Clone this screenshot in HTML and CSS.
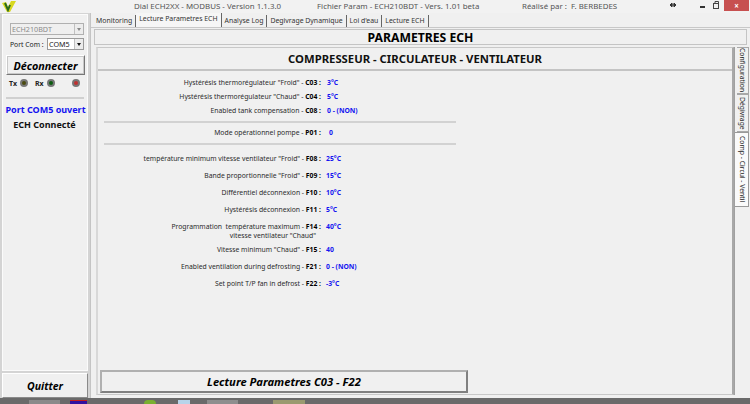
FILE: index.html
```html
<!DOCTYPE html>
<html lang="fr">
<head>
<meta charset="utf-8">
<title>Dial ECH2XX</title>
<link rel="stylesheet" href="styles.css">
</head>
<body>
<div class="app">
  <header class="titlebar">
    <svg class="logo" width="16" height="13" viewBox="0 0 16 13"><path d="M1 3l4-1 2 5 3-6 5 0-6 11-3 0z" fill="#d8d820"/><path d="M4 3l3 7 2-5" fill="none" stroke="#2a6a20" stroke-width="2"/></svg>
    <span class="t1">Dial ECH2XX - MODBUS - Version 1.1.3.0</span>
    <span class="t2">Fichier Param - ECH210BDT - Vers. 1.01 beta</span>
    <span class="t3">Réalisé par :  F. BERBEDES</span>
    <svg class="arrows" width="15" height="10" viewBox="0 0 15 10"><path d="M3 5h6M3 5l2-2v4zM9 5l-2-2v4z" fill="#333" stroke="#333"/></svg>
    <div class="wctl">
      <svg class="wicons" width="37" height="10" viewBox="0 0 37 10"><rect x="18" y="6" width="5" height="2" fill="#333"/><rect x="31.5" y="3.5" width="5" height="5" fill="none" stroke="#444"/><path d="M33 3.5V1.5h3.5v5" fill="none" stroke="#444"/></svg>
      <span class="close">×</span>
    </div>
  </header>
  <main class="main">
    <aside class="side">
      <div class="sidebox">
        <div class="combo wide disabled"><span>ECH210BDT</span><i class="drop"></i></div>
        <div class="portrow"><span>Port Com :</span><div class="combo small"><span>COM5</span><i class="drop dark"></i></div></div>
        <button class="connect">Déconnecter</button>
        <div class="leds">
          <b>Tx</b><i class="led olive"></i>
          <b class="rx">Rx</b><i class="led green"></i>
          <i class="led red"></i>
        </div>
        <hr class="sep">
        <div class="port">Port COM5 ouvert</div>
        <div class="conn">ECH Connecté</div>
      </div>
      <button class="quit">Quitter</button>
    </aside>
    <section class="content">
      <nav class="tabs">
        <span class="tab">Monitoring</span>
        <span class="tab active">Lecture Parametres ECH</span>
        <span class="tab">Analyse Log</span>
        <span class="tab">Degivrage Dynamique</span>
        <span class="tab">Loi d'eau</span>
        <span class="tab">Lecture ECH</span>
      </nav>
      <div class="page">
        <h1 class="head">PARAMETRES ECH</h1>
        <div class="split">
          <div class="panel">
            <h2 class="sub">COMPRESSEUR - CIRCULATEUR - VENTILATEUR</h2>
            <div class="params">
              <div class="row r1"><span class="lab">Hystérésis thermorégulateur "Froid" - <b>C03 :</b></span><span class="val v1">3°C</span></div>
              <div class="row r2"><span class="lab">Hystérésis thermorégulateur "Chaud" - <b>C04 :</b></span><span class="val v1">5°C</span></div>
              <div class="row r2"><span class="lab">Enabled tank compensation - <b>C08 :</b></span><span class="val v1">0 - (NON)</span></div>
              <hr class="rule">
              <div class="row r3"><span class="lab">Mode opérationnel pompe - <b>P01 :</b></span><span class="val v2">0</span></div>
              <hr class="rule">
              <div class="row r4"><span class="lab">température minimum vitesse ventilateur "Froid" - <b>F08 :</b></span><span class="val">25°C</span></div>
              <div class="row r5"><span class="lab">Bande proportionnelle "Froid" - <b>F09 :</b></span><span class="val">15°C</span></div>
              <div class="row r5"><span class="lab">Différentiel déconnexion - <b>F10 :</b></span><span class="val">10°C</span></div>
              <div class="row r5"><span class="lab">Hystérésis déconnexion - <b>F11 :</b></span><span class="val">5°C</span></div>
              <div class="row r6"><span class="lab">Programmation  température maximum - <b>F14 :</b><br><span class="sub2">vitesse ventilateur "Chaud"</span></span><span class="val">40°C</span></div>
              <div class="row r7"><span class="lab">Vitesse minimum "Chaud" - <b>F15 :</b></span><span class="val">40</span></div>
              <div class="row r5"><span class="lab">Enabled ventilation during defrosting - <b>F21 :</b></span><span class="val">0 - (NON)</span></div>
              <div class="row r5"><span class="lab">Set point T/P fan in defrost - <b>F22 :</b></span><span class="val">-3°C</span></div>
            </div>
            <div class="foot"><button class="read">Lecture Parametres C03 - F22</button></div>
          </div>
          <div class="vtabs">
            <span class="vtab cfg">Configuration</span>
            <span class="vtab deg">Dégivrage</span>
            <span class="vtab on">Comp - Circul - Ventil</span>
          </div>
        </div>
      </div>
    </section>
  </main>
  <footer class="taskbar">
    <i class="tk a"></i><i class="tk b"></i><i class="tk c"></i><i class="tk d"></i><i class="tk e"></i><i class="tk f"></i>
  </footer>
</div>
</body>
</html>
```
FILE: styles.css
```css
* { box-sizing: border-box; }
html, body { margin: 0; padding: 0; }
body { width: 750px; height: 404px; overflow: hidden; background: #f0f0f0; font-family: "Noto Sans", "DejaVu Sans", sans-serif; font-size: 6.8px; color: #222; }
.app { display: flex; flex-direction: column; width: 750px; height: 404px; }

.titlebar { display: flex; align-items: flex-start; height: 13px; background: #f2f2f2; color: #555; font-size: 7.9px; line-height: 13px; flex: none; }
.logo { flex: none; margin-left: 1px; }
.t1 { flex: none; margin-left: 117px; width: 183px; white-space: nowrap; }
.t2 { flex: none; width: 205px; white-space: nowrap; }
.t3 { flex: none; width: 145px; white-space: pre; }
.arrows { flex: none; }
.wctl { flex: none; display: flex; align-items: flex-start; gap: 5px; }
.wicons { flex: none; display: block; }
.close { display: block; flex: none; width: 25px; height: 11px; background: #c75050; color: #fff; text-align: center; font-size: 8px; line-height: 11px; font-weight: 700; }

.main { flex: 1; display: flex; min-height: 0; }
.side { width: 91px; flex: none; background: #d4d4d4; padding: 1px 2px 0 2px; display: flex; flex-direction: column; gap: 2px; border-right: 1px solid #c4c4c4; }
.sidebox { flex: 1; background: #f0f0f0; border: 1px solid #fbfbfb; padding: 8px 4px 0 3px; }
.combo { display: flex; justify-content: space-between; align-items: center; height: 12px; border: 1px solid #9a9a9a; background: #fff; padding-left: 1px; font-size: 7.2px; color: #222; }
.wide { width: 74px; margin-left: 4px; }
.disabled { background: #efefef; color: #8a8a8a; border-color: #b0b0b0; }
.drop { width: 9px; height: 10px; position: relative; background: #ececec; border-left: 1px solid #c0c0c0; }
.drop::after { content: ""; position: absolute; left: 2px; top: 4px; border: 2px solid transparent; border-top: 3px solid #888; }
.drop.dark::after { border-top-color: #111; }
.portrow { display: flex; align-items: center; justify-content: space-between; margin: 3px 0 0 4px; width: 74px; white-space: nowrap; }
.small { width: 37px; }
.connect { display: block; width: 79px; height: 20px; margin: 5px 0 0 0; padding: 0; background: #f0f0f0; border: 1px solid; border-color: #fff #777 #777 #fff; box-shadow: 0 0 0 1px #c8c8c8 inset; font: italic 700 10.8px "Noto Sans", "DejaVu Sans", sans-serif; color: #000; }
.leds { display: flex; align-items: center; height: 10px; margin: 3px 0 0 3px; font-size: 7px; }
.leds b { font-weight: 700; }
.rx { margin-left: 7px; }
.led { width: 8px; height: 8px; margin-left: 3px; border-radius: 50%; border: 2px solid #777; }
.olive { background: #4a4a10; }
.green { background: #0c5c10; }
.red { background: #c03030; margin-left: 17px; }
.sep { height: 2px; margin: 9px -1px 0 0; border: 0; background: #d0d0d0; }
.port { margin: 4px -3px 0 -1px; text-align: center; white-space: nowrap; color: #1414f0; font-weight: 700; font-size: 9px; line-height: 13px; }
.conn { margin-top: 2px; text-align: center; white-space: nowrap; color: #111; font-weight: 700; font-size: 9px; line-height: 13px; }
.quit { flex: none; height: 25px; margin: 0; padding: 0; background: #f0f0f0; border: 1px solid; border-color: #fff #8a8a8a #8a8a8a #fff; font: italic 700 10.5px "Noto Sans", "DejaVu Sans", sans-serif; color: #000; }

.content { flex: 1; min-width: 0; display: flex; flex-direction: column; }
.tabs { flex: none; height: 14px; display: flex; align-items: flex-end; padding-left: 2px; font-size: 6.9px; }
.tab { height: 12px; padding: 0 3px; line-height: 12px; white-space: nowrap; border-right: 1px solid #666; color: #333; }
.tab.active { height: 14px; line-height: 12px; background: #f6f6f6; padding: 0 3px; }
.page { flex: 1; min-height: 0; background: #f0f0f0; border-top: 1px solid #c8c8c8; padding: 1px 3px 3px 3px; display: flex; flex-direction: column; }
.head { flex: none; height: 16px; margin: 0 0 2px; background: #f0f0f0; border: 1px solid #c4c4c4; text-align: center; font-size: 12.2px; line-height: 15px; color: #000; font-weight: 700; }
.split { flex: 1; min-height: 0; display: flex; padding-left: 2px; }
.panel { width: 638px; flex: none; display: flex; flex-direction: column; border: 1px solid #c8c8c8; border-right: 2px solid #a8a8a8; border-left: 2px solid #d8d8d8; }
.sub { flex: none; height: 23px; margin: 0; text-align: center; border-bottom: 2px solid #c4c4c4; font-size: 11.3px; line-height: 22px; color: #111; font-weight: 700; }
.params { flex: 1; padding-top: 7px; }
.row { display: flex; align-items: flex-start; line-height: 10px; }
.lab { width: 223px; flex: none; text-align: right; white-space: pre; color: #2a2a2a; }
.lab b { color: #000; }
.sub2 { margin-right: 5px; }
.val { margin-left: 5px; color: #1515f0; font-weight: 700; white-space: nowrap; }
.v1 { margin-left: 6px; }
.v2 { margin-left: 8px; }
.r1 { margin-top: 0; }
.r2 { margin-top: 4px; }
.r3 { margin-top: 5px; }
.r4 { margin-top: 9px; }
.r5 { margin-top: 7px; }
.r6 { margin-top: 7px; line-height: 9px; }
.r7 { margin-top: 5px; }
.rule { height: 2px; width: 352px; margin: 5px 0 0 6px; border: 0; background: #d2d2d2; }
.foot { flex: none; padding: 0 0 1px 2px; }
.read { display: block; width: 368px; height: 23px; margin: 0; padding: 0; background: #f0f0f0; border: 2px solid; border-color: #b0b0b0 #808080 #808080 #b0b0b0; font: italic 700 11.2px "Noto Sans", "DejaVu Sans", sans-serif; color: #000; }

.vtabs { flex: 1; display: flex; flex-direction: column; align-items: flex-end; border-left: 1px solid #a0a0a0; }
.vtab { writing-mode: vertical-rl; display: block; width: 12px; font-size: 6.8px; line-height: 11px; text-align: center; white-space: nowrap; border: 1px solid #a8a8a8; border-left: 0; color: #222; }
.cfg { height: 47px; }
.deg { height: 38px; }
.on { height: 75px; width: 14px; background: #fafafa; border-color: #999; }

.taskbar { flex: none; height: 6px; background: #6a6a6a; display: flex; align-items: flex-end; }
.tk { display: block; height: 4px; }
.a { width: 31px; margin-left: 29px; background: #8a8a8a; }
.b { width: 17px; margin-left: 10px; background: #3010a0; border-top: 1px solid #c02020; }
.c { width: 12px; margin-left: 57px; background: #7ab030; border-radius: 6px 6px 0 0; }
.d { width: 12px; margin-left: 22px; background: #b8d4ea; }
.e { width: 31px; margin-left: 17px; background: #8e8e8e; }
.f { width: 32px; margin-left: 35px; background: #9a9a70; }
```
